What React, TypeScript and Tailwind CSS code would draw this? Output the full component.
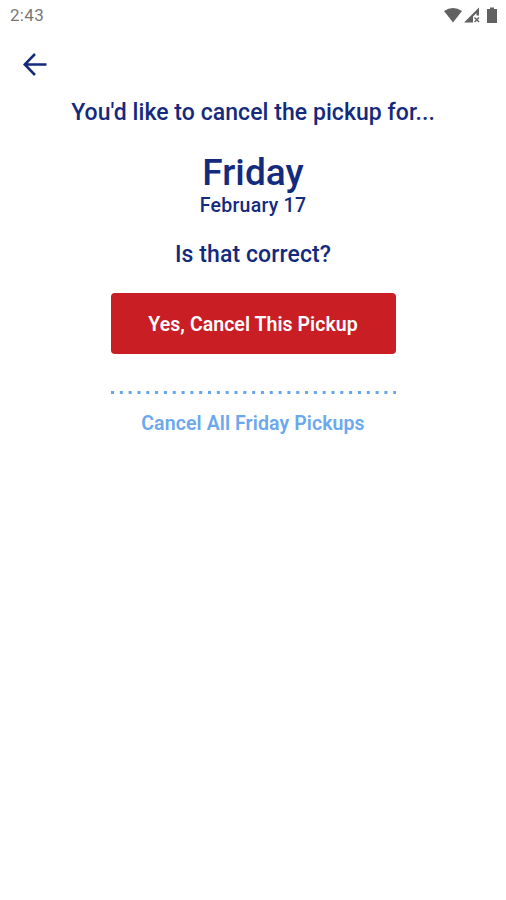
export default function App() {
  return (
    <main className="flex h-[900px] w-[506px] flex-col bg-white font-['Roboto',sans-serif] text-[#142a7c]">
      <header className="flex h-8 items-center justify-between pr-[8px] pl-[10px] text-[17px] tracking-[0.3px] text-[#777]">
        <span>2:43</span>
        <svg width="54" height="18" viewBox="0 0 54 18" fill="#616161">
          <path d="M0 4Q9 -2 18 4L9 15.5Z" />
          <path d="M35 0.500V8.500H32.500V6L29 9.500V15.500H20Z" />
          <path d="M30.500 10.500l4.500 4.500m0-4.500l-4.500 4.500" stroke="#616161" strokeWidth="1.4" />
          <path d="M43 2h3V0.500h4v1.500h3v14h-10z" />
        </svg>
      </header>
      <nav className="flex h-16 items-center pl-[23px]">
        <svg width="24" height="24" viewBox="0 0 24 24" fill="none" stroke="#142a7c" strokeWidth="2.5"><path d="M23.500 12.500H2M12 2L1.700 12.500L12 23" /></svg>
      </nav>
      <section className="flex flex-col items-center font-medium">
        <h1 className="mt-[2px] text-[23px] leading-[30px] tracking-[0.06px]">You'd like to cancel the pickup for...</h1>
        <h2 className="mt-[24px] text-[37px] leading-[42px] tracking-[0.1px]">Friday</h2>
        <p className="text-[19.5px] leading-[24px] tracking-[0.25px]">February 17</p>
        <p className="mt-[22px] text-[23px] leading-[30px] tracking-[0.1px]">Is that correct?</p>
        <button className="mt-[23px] h-[61px] w-[285px] rounded-[4px] bg-[#c81e24] pt-[3px] text-[19.5px] font-semibold tracking-[0.05px] text-white">Yes, Cancel This Pickup</button>
        <svg className="mt-[37px]" width="286" height="3"><path d="M1 1.5H286" stroke="#64a5f0" strokeWidth="3" strokeDasharray="3 5.82" /></svg>
        <button className="mt-[17px] text-[19.5px] leading-[26px] font-semibold tracking-[0.1px] text-[#6ca8ec]">Cancel All Friday Pickups</button>
      </section>
    </main>
  );
}
